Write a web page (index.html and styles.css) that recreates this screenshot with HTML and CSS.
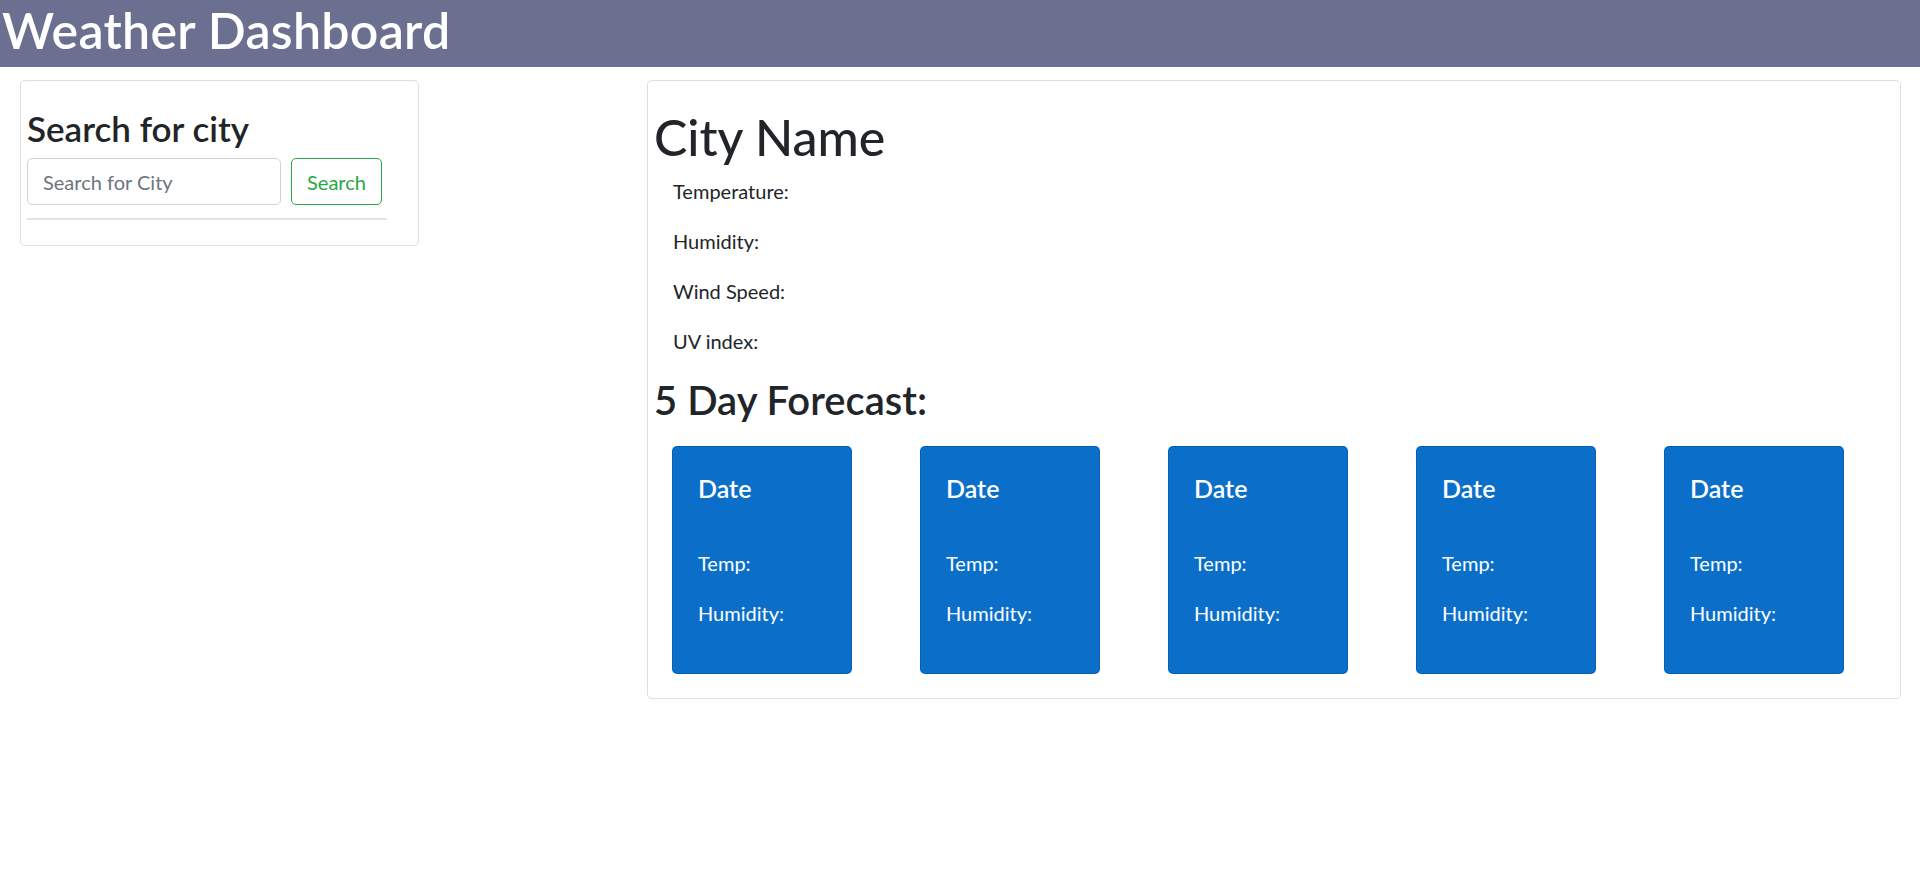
FILE: index.html
```html
<!DOCTYPE html>
<html lang="en">
<head>
<meta charset="utf-8">
<title>Weather Dashboard</title>
<link rel="stylesheet" href="styles.css">
</head>
<body>
<header class="topbar">
  <h1 class="brand">Weather Dashboard</h1>
</header>
<main class="layout">
  <section class="side">
    <div class="panel search-panel">
      <h3 class="panel-title">Search for city</h3>
      <form class="search-form">
        <input class="search-input" type="text" placeholder="Search for City">
        <button class="search-btn" type="button">Search</button>
      </form>
      <div class="divider"></div>
    </div>
  </section>
  <section class="content">
    <div class="panel city-panel">
      <h1 class="city-name">City Name</h1>
      <p class="stat">Temperature:</p>
      <p class="stat">Humidity:</p>
      <p class="stat">Wind Speed:</p>
      <p class="stat">UV index:</p>
      <h2 class="forecast-title">5 Day Forecast:</h2>
      <div class="forecast-row">
        <div class="day-card"><h5 class="day-date">Date</h5><p class="day-line">Temp:</p><p class="day-line">Humidity:</p></div>
        <div class="day-card"><h5 class="day-date">Date</h5><p class="day-line">Temp:</p><p class="day-line">Humidity:</p></div>
        <div class="day-card"><h5 class="day-date">Date</h5><p class="day-line">Temp:</p><p class="day-line">Humidity:</p></div>
        <div class="day-card"><h5 class="day-date">Date</h5><p class="day-line">Temp:</p><p class="day-line">Humidity:</p></div>
        <div class="day-card"><h5 class="day-date">Date</h5><p class="day-line">Temp:</p><p class="day-line">Humidity:</p></div>
      </div>
    </div>
  </section>
</main>
</body>
</html>
```
FILE: styles.css
```css
* { box-sizing: border-box; }
html, body { margin: 0; padding: 0; background: #fff; }
body {
  font-family: Lato, "Open Sans", "Liberation Sans", sans-serif;
  font-size: 20px;
  color: #212529;
}
.topbar {
  background: #6c7090;
  height: 67px;
  padding-bottom: 7px;
}
.brand {
  margin: 0;
  padding-left: 2px;
  font-size: 50px;
  line-height: 60px;
  letter-spacing: 0.3px;
  font-weight: 600;
  color: #fff;
}
.layout {
  display: grid;
  grid-template-columns: 627px 1fr;
  padding: 13px 19px 0 20px;
  align-items: start;
}
.panel {
  border: 1px solid rgba(0,0,0,.125);
  border-radius: 5px;
  background: #fff;
}
.search-panel {
  width: 399px;
  padding: 26px 6px 25px;
}
.panel-title {
  margin: 0 0 9px;
  font-size: 35px;
  line-height: 42px;
  font-weight: 600;
}
.search-form {
  display: flex;
  gap: 10px;
  margin: 0;
}
.search-input {
  width: 254px;
  height: 47px;
  padding: 0 15px;
  border: 1px solid #ced4da;
  border-radius: 5px;
  font-family: inherit;
  font-size: 20px;
  color: #495057;
  outline: none;
}
.search-input::placeholder { color: #6c757d; }
.search-btn {
  width: 91px;
  height: 47px;
  padding: 0 15px;
  border: 1px solid #28a745;
  border-radius: 5px;
  background: #fff;
  color: #28a745;
  font-family: inherit;
  font-size: 20px;
}
.divider {
  width: 360px;
  height: 2px;
  background: #e2e2e2;
  margin: 13px 0 0;
}
.city-panel {
  padding: 26px 6px 24px;
}
.city-name {
  margin: 0 0 9px;
  font-size: 50px;
  line-height: 60px;
  font-weight: 500;
}
.stat {
  margin: 0 0 20px;
  padding-left: 19px;
  line-height: 30px;
}
.forecast-title {
  margin: 0 0 22px;
  font-size: 40px;
  line-height: 48px;
  font-weight: 600;
}
.forecast-row {
  display: flex;
  gap: 68px;
  padding-left: 18px;
}
.day-card {
  width: 180px;
  height: 228px;
  padding: 26px 25px 25px;
  background: #0b6fca;
  border: 1px solid rgba(0,0,0,.125);
  border-radius: 5px;
  color: #fff;
}
.day-date {
  margin: 0 0 45px;
  font-size: 25px;
  line-height: 30px;
  font-weight: 600;
}
.day-line {
  margin: 0 0 20px;
  line-height: 30px;
}
```
